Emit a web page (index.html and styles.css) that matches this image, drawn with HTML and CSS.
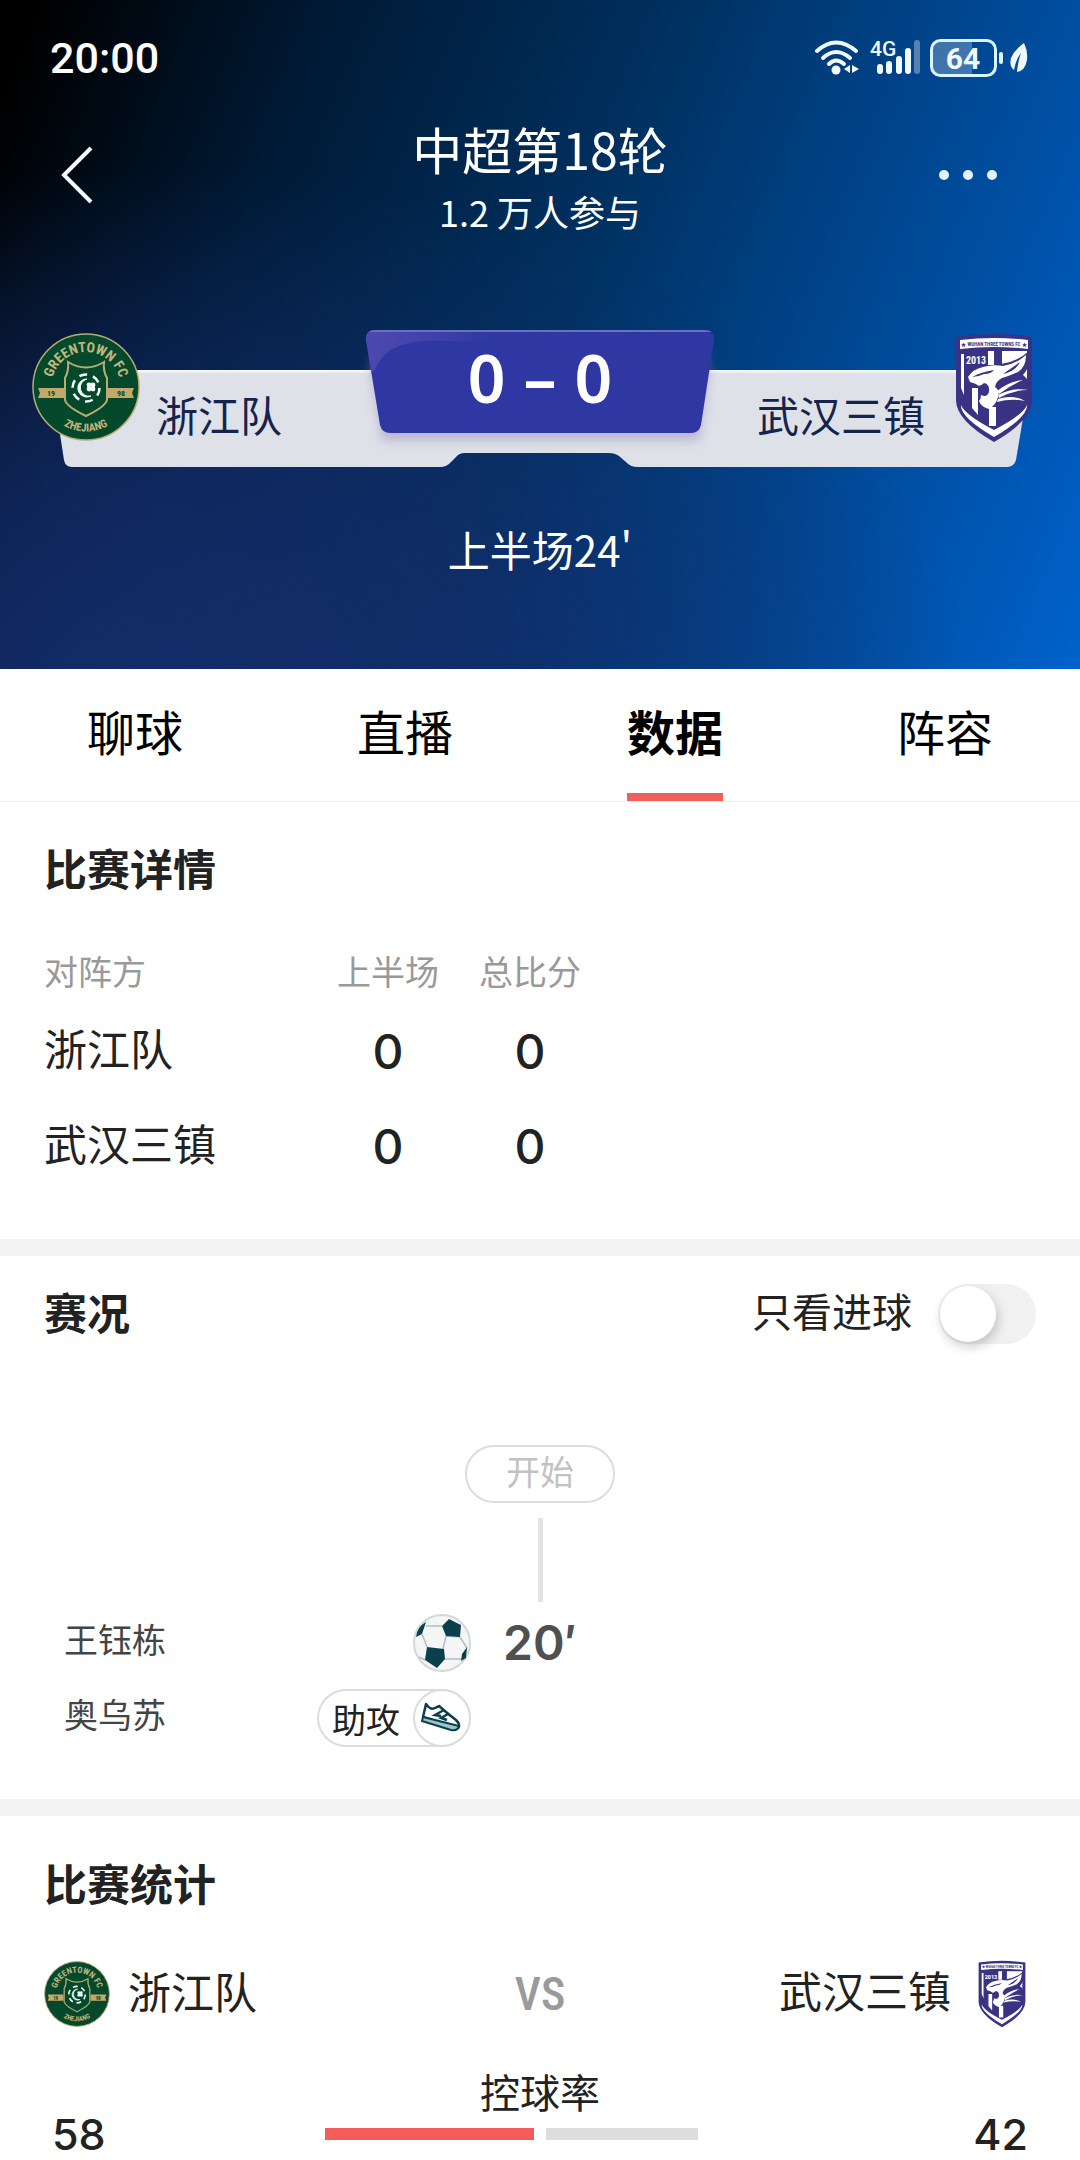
FILE: index.html
```
<!DOCTYPE html>
<html lang="zh-CN">
<head>
  <meta charset="UTF-8">
  <meta name="viewport" content="width=device-width, initial-scale=1">
  <title>中超第18轮</title>
  <link rel="stylesheet" href="styles.css">
</head>
<body>

  <!-- 队徽 -->
  <svg class="defs" aria-hidden="true">
    <symbol id="badge-zj" viewBox="0 0 108 108">
      <circle cx="54" cy="54" r="53" fill="#04492b" stroke="#b9ac72" stroke-width="1.5"/>
      <path id="arc-top" d="M19.500 53.500A34.500 34.500 0 0 1 88.500 53.500" fill="none"/>
      <path id="arc-bottom" d="M9.500 54A44.500 44.500 0 0 0 98.500 54" fill="none"/>
      <text class="badge-text" font-size="14" fill="#c3b67c" text-anchor="middle"><textPath href="#arc-top" startOffset="50%">GREENTOWN FC</textPath></text>
      <text class="badge-text" font-size="11" fill="#c3b67c" text-anchor="middle"><textPath href="#arc-bottom" startOffset="50%">ZHEJIANG</textPath></text>
      <path d="M6 55h26v10H6l2-5zM76 55h26l-2 5 2 5H76z" fill="#c3a868"/>
      <text class="badge-text" x="19" y="63" font-size="8" fill="#04492b" text-anchor="middle">19</text>
      <text class="badge-text" x="89" y="63" font-size="8" fill="#04492b" text-anchor="middle">98</text>
      <path d="M36 29q18 11 36 0q-1 9 3 16v22q-2 7-21 16q-19-9-21-16V45q4-7 3-16z" fill="#04492b" stroke="#b9ac72" stroke-width="2"/>
      <circle cx="54" cy="55" r="13.500" fill="none" stroke="#f3fffb" stroke-width="2.500" stroke-dasharray="8 6.100"/>
      <path d="M55 46a9 9 0 1 0 4 17a8.500 8.500 0 0 1-4-17z" fill="#f3fffb" stroke="#f3fffb"/>
      <g fill="#f3fffb"><circle cx="57" cy="52" r="2.400"/><circle cx="61" cy="52" r="2.400"/><circle cx="57" cy="56" r="2.400"/><circle cx="61" cy="56" r="2.400"/></g>
    </symbol>

    <symbol id="badge-wh" viewBox="0 0 78 110">
      <path d="M1 4Q39-2 77 4V68Q76 88 39 109Q2 88 1 68z" fill="#3a3283"/>
      <path d="M5 7Q39 3 73 7V16Q39 12 5 16z" fill="#fff"/>
      <text class="badge-text" x="39" y="13" font-size="5" fill="#3a3283" text-anchor="middle">★ WUHAN THREE TOWNS FC ★</text>
      <path d="M6 21h3v41l-3-7z" fill="#fff"/>
      <path d="M33 18h6v14h-6zM47 18h25v32L60 40H47z" fill="#fff"/>
      <path d="M17 55h6v27l-6-7zM34 74h7v19h-7z" fill="#fff"/>
      <text class="badge-text" x="21" y="31" font-size="10" fill="#fff" text-anchor="middle">2013</text>
      <!-- 豹头 -->
      <path d="M46 31Q62 29 74 18Q76 34 68 42Q76 48 75 60Q72 76 58 78L44 74z" fill="#3a3283"/>
      <path d="M13 44Q18 36 28 34Q38 31 48 33Q61 31 71 22Q71 34 63 39Q54 43 47 45Q41 48 40 54Q45 57 43 64Q41 72 34 76Q26 74 24 68Q26 66 26 62Q32 65 34 59Q35 51 29 50Q24 55 21 51L15 49z" fill="#fff"/>
      <path d="M17 44Q26 39 39 37Q36 41 29 41Q23 44 17 44zM48 41L65 29Q61 37 52 40z" fill="#3a3283"/>
      <path d="M42 58Q54 48 68 47Q56 52 44 61zM43 62Q58 54 73 57Q58 57 44 65zM43 66Q58 61 70 68Q56 65 42 69z" fill="#fff"/>
      <path d="M6 72Q10 82 39 97Q68 82 72 72Q73 84 39 104Q5 84 6 72z" fill="#fff"/>
    </symbol>
  </svg>

  <header class="hero">
    <div class="statusbar">
      <span class="clock">20:00</span>
      <span class="status-icons">
        <svg width="50" height="38" viewBox="0 0 50 38" aria-label="WiFi">
          <g fill="none" stroke="#f0faff" stroke-width="4" stroke-linecap="round">
            <path d="M3 12Q22-5 42 12"/><path d="M9 19Q22 7 36 19"/><path d="M15 25Q22 18 30 25"/>
          </g>
          <circle cx="22" cy="31" r="4.500" fill="#f0faff"/>
          <path d="M36 26v8l-6-4zM38 26l7 4-7 4z" fill="#f0faff"/>
        </svg>
        <svg class="signal" width="54" height="38" viewBox="0 0 54 38" aria-label="4G">
          <text class="net" x="0" y="17">4G</text>
          <g fill="#f0faff"><rect x="7" y="25" width="6" height="10" rx="3"/><rect x="16" y="22" width="6" height="13" rx="3"/><rect x="26" y="17" width="6" height="18" rx="3"/><rect x="35" y="9" width="6" height="26" rx="3"/></g>
          <rect x="44" y="1" width="6" height="34" rx="3" fill="#f0faff" opacity=".35"/>
        </svg>
        <svg width="74" height="38" viewBox="0 0 74 38" aria-label="电量 64%">
          <path d="M10 2h32v34H10a8 8 0 0 1-8-8V10a8 8 0 0 1 8-8z" fill="#fff" opacity=".25"/>
          <rect x="1.500" y="1.500" width="64" height="35" rx="9" fill="none" stroke="#d9f5ff" stroke-width="3"/>
          <text class="level" x="33" y="30" text-anchor="middle">64</text>
          <rect x="69" y="13" width="4" height="12" rx="2" fill="#d9f5ff"/>
        </svg>
        <svg width="18" height="32" viewBox="0 0 18 32" aria-label="省电">
          <path d="M14 1Q4 8 1 16Q-1 24 4 28Q6 17 11 11Q8 19 7 30Q15 29 17 18Q18 9 14 1z" fill="#f0faff"/>
        </svg>
      </span>
    </div>

    <div class="navbar">
      <button class="icon-btn back" type="button" aria-label="返回">
        <svg width="32" height="58" viewBox="0 0 32 58"><path d="M30 2L3 29L30 56" fill="none" stroke="#f2f8ff" stroke-width="4"/></svg>
      </button>
      <div class="heading">
        <h1>中超第18轮</h1>
        <p>1.2 万人参与</p>
      </div>
      <button class="icon-btn more" type="button" aria-label="更多">
        <svg width="58" height="12" viewBox="0 0 58 12" fill="#e4f4ff"><circle cx="5" cy="6" r="5"/><circle cx="29" cy="6" r="5"/><circle cx="53" cy="6" r="5"/></svg>
      </button>
    </div>

    <div class="scoreboard">
      <svg class="board-bg" viewBox="0 0 1016 138" preserveAspectRatio="none" aria-hidden="true">
        <defs>
          <linearGradient id="panel" x1="0" y1="0" x2="0" y2="1"><stop offset="0" stop-color="#fff"/><stop offset=".04" stop-color="#dfe1e9"/><stop offset="1" stop-color="#dfe1e9"/></linearGradient>
          <linearGradient id="shine"><stop offset="0" stop-color="#4d49b0"/><stop offset=".4" stop-color="#4543ac"/><stop offset="1" stop-color="#2f38a2"/></linearGradient>
          <filter id="soft" x="-10%" y="-10%" width="120%" height="140%"><feGaussianBlur stdDeviation="6"/></filter>
          <clipPath id="box"><path d="M344 0H672Q683 0 682 10L669 95Q667 103 659 103H358Q350 103 348 95L334 10Q333 0 344 0z"/></clipPath>
        </defs>
        <path d="M18 40H999L984 130Q982 137 975 137H606Q598 137 594 132L587 126Q583 123 577 123H433Q427 123 424 127L419 132Q415 137 408 137H40Q33 137 32 130z" fill="url(#panel)"/>
        <path d="M338 30H678L667 110H350z" fill="#8f84b4" opacity=".5" filter="url(#soft)"/>
        <g clip-path="url(#box)">
          <rect x="330" width="356" height="104" fill="#2f38a2"/>
          <path d="M330 0H460V11H390Q352 14 343 40L330 50z" fill="url(#shine)"/>
          <path d="M334 1H682" stroke="#6871c4" stroke-width="2"/>
        </g>
      </svg>
      <div class="side home">
        <svg class="badge-l" role="img" aria-label="浙江队"><use href="#badge-zj"/></svg>
        <span class="side-name">浙江队</span>
      </div>
      <div class="score"><span>0</span><span>–</span><span>0</span></div>
      <div class="side away">
        <span class="side-name">武汉三镇</span>
        <svg class="badge-r" role="img" aria-label="武汉三镇"><use href="#badge-wh"/></svg>
      </div>
    </div>

    <p class="phase">上半场24'</p>
  </header>

  <nav class="tabs">
    <button type="button">聊球</button>
    <button type="button">直播</button>
    <button type="button" class="active">数据</button>
    <button type="button">阵容</button>
  </nav>

  <main>
    <section class="detail">
      <h2>比赛详情</h2>
      <table>
        <thead>
          <tr><th scope="col">对阵方</th><th scope="col">上半场</th><th scope="col">总比分</th></tr>
        </thead>
        <tbody>
          <tr><th scope="row">浙江队</th><td>0</td><td>0</td></tr>
          <tr><th scope="row">武汉三镇</th><td>0</td><td>0</td></tr>
        </tbody>
      </table>
    </section>

    <section class="events">
      <div class="events-head">
        <h2>赛况</h2>
        <div class="only-goals">
          <label for="onlyGoals">只看进球</label>
          <input type="checkbox" id="onlyGoals" class="switch">
        </div>
      </div>

      <div class="timeline">
        <span class="start">开始</span>
        <span class="stem"></span>
        <div class="event">
          <div class="event-rows">
            <div class="event-row">
              <span class="player">王钰栋</span>
              <svg width="58" height="58" viewBox="0 0 58 58" role="img" aria-label="进球">
                <circle cx="29" cy="29" r="28" fill="#f4f5f5" stroke="#d3d9da" stroke-width="2"/>
                <path d="M13 12H29M9 20L14 33M33 22L30 35M47 23L54 34M32 45H48M12 46L6 43M33 22L47 23" fill="none" stroke="#b5bdbe" stroke-width="1.500"/>
                <path d="M36 5L48 11L47 23L33 22L29 12zM14 33L31 35L32 45L24 54L12 46zM13 8L9 20L3 23Q4 13 13 8zM54 33L53 44L48 47L49 40z" fill="#0c3f4c"/>
              </svg>
            </div>
            <div class="event-row">
              <span class="player">奥乌苏</span>
              <span class="assist">助攻
                <svg width="58" height="58" viewBox="0 0 58 58" aria-hidden="true">
                  <circle cx="29" cy="29" r="28" fill="#fff" stroke="#dcdcdc" stroke-width="2"/>
                  <path d="M13 15L10 28L45 39Q48 36 43 31Q35 25 26 17Q20 21 17 19Q15 18 13 15z" fill="#fff" stroke="#0c3f4c" stroke-width="2.500" stroke-linejoin="round"/>
                  <path d="M10 28L9 32L38 41Q45 42 46 37z" fill="#9dc3cb" stroke="#0c3f4c" stroke-width="2"/>
                  <path d="M31 21L22 26L28 27M35 25L28 29L34 31" fill="none" stroke="#0c3f4c" stroke-width="2.500"/>
                </svg>
              </span>
            </div>
          </div>
          <time class="minute">20′</time>
        </div>
      </div>
    </section>

    <section class="stats">
      <h2>比赛统计</h2>
      <div class="versus">
        <div class="team"><svg class="mini-l" aria-hidden="true"><use href="#badge-zj"/></svg><span>浙江队</span></div>
        <span class="vs">VS</span>
        <div class="team right"><span>武汉三镇</span><svg class="mini-r" aria-hidden="true"><use href="#badge-wh"/></svg></div>
      </div>
      <h3>控球率</h3>
      <div class="stat">
        <span class="val">58</span>
        <div class="bar"><i class="bar-home" style="flex-grow: 58"></i><i class="bar-away" style="flex-grow: 42"></i></div>
        <span class="val val-away">42</span>
      </div>
    </section>
  </main>

</body>
</html>
```
FILE: styles.css
```
:root {
  --text: #222;
  --muted: #999;
  --accent: #f45b5b;
  --band: #f3f4f5;
  --gutter: 44px;
  --cjk: "Noto Sans CJK SC", sans-serif;
  --num: Inter, "Noto Sans CJK SC", sans-serif;
}

* { box-sizing: border-box; }

body {
  margin: 0;
  background: #fff;
  color: var(--text);
  font-family: var(--cjk);
}

h1, h2, h3, p { margin: 0; }

button {
  border: none;
  background: none;
  padding: 0;
  font-family: inherit;
  cursor: pointer;
}

svg { display: block; }

.defs { display: none; }

.badge-text {
  font-family: "Roboto Condensed", Roboto, sans-serif;
  font-weight: 700;
}

/* 顶部 */
.hero {
  padding-bottom: 92px;
  color: #fff;
  background:
    radial-gradient(ellipse 75% 80% at 15% 105%, rgba(22, 46, 110, 0.95) 0%, rgba(20, 44, 106, 0.7) 45%, rgba(16, 40, 100, 0) 100%),
    linear-gradient(112deg, #000 3%, #001a36 25%, #00305f 50%, #004894 74%, #0062cc 100%);
}

.statusbar {
  display: flex;
  justify-content: space-between;
  align-items: center;
  height: 114px;
  padding: 2px 52px 0 50px;
}

.clock {
  font: 500 43px Roboto, sans-serif;
}

.status-icons {
  display: flex;
  align-items: center;
  gap: 6px;
}

.signal { overflow: visible; }

.net {
  font: 500 21px Roboto, sans-serif;
  fill: #f0faff;
}

.level {
  font: 700 30px Roboto, sans-serif;
  fill: #f0faff;
}

.navbar {
  display: grid;
  grid-template-columns: 1fr auto 1fr;
  align-items: center;
  height: 130px;
  padding: 0 61px;
}

.icon-btn {
  justify-self: start;
  padding-bottom: 8px;
}

.more {
  justify-self: end;
  padding-right: 22px;
}

.heading {
  padding-top: 4px;
  text-align: center;
}

.heading h1 {
  font-size: 50px;
  font-weight: 400;
  line-height: 60px;
}

.heading p {
  font-size: 36px;
  line-height: 66px;
}

.scoreboard {
  position: relative;
  display: grid;
  grid-template-columns: 1fr 348px 1fr;
  height: 138px;
  margin: 86px 32px 0;
}

.board-bg {
  position: absolute;
  inset: 0;
  width: 100%;
  height: 100%;
  overflow: visible;
}

.side {
  position: relative;
  display: flex;
  align-items: flex-start;
  gap: 16px;
  padding-top: 3px;
}

.away {
  justify-content: flex-end;
  gap: 30px;
  padding-right: 15px;
}

.badge-l { width: 108px; height: 108px; }
.badge-r { width: 78px; height: 110px; }

.side-name {
  padding-top: 53px;
  color: #14244d;
  font-size: 42px;
  line-height: 56px;
}

.score {
  position: relative;
  display: flex;
  justify-content: center;
  gap: 18px;
  font: 600 66px/94px "Noto Sans", sans-serif;
}

.phase {
  margin-top: 53px;
  font-size: 42px;
  line-height: 56px;
  text-align: center;
}

/* 标签 */
.tabs {
  display: flex;
  border-bottom: 1px solid #eee;
}

.tabs button {
  position: relative;
  flex: 1;
  height: 132px;
  padding-bottom: 11px;
  color: #000;
  font-size: 48px;
}

.tabs .active { font-weight: 700; }

.tabs .active::after {
  content: "";
  position: absolute;
  left: 50%;
  bottom: 0;
  width: 96px;
  height: 8px;
  margin-left: -48px;
  background: #ee5f5d;
}

section { padding: 35px var(--gutter) 0; }

h2 {
  font-size: 43px;
  font-weight: 700;
  line-height: 60px;
}

/* 比赛详情 */
.detail {
  padding-bottom: 48px;
  border-bottom: 17px solid var(--band);
}

table {
  margin-top: 42px;
  border-collapse: collapse;
  table-layout: fixed;
  width: 557px;
}

th, td {
  padding: 0;
  font-weight: 400;
}

thead th {
  width: 142px;
  height: 62px;
  color: var(--muted);
  font-size: 34px;
}

thead th:first-child { width: 273px; }

th:first-child { text-align: left; }

tbody th, tbody td {
  height: 95px;
  padding-bottom: 4px;
  font-size: 43px;
  line-height: 60px;
}

tbody td {
  padding: 6px 0 0;
  font-family: var(--num);
  font-size: 48px;
  font-weight: 500;
  text-align: center;
}

/* 赛况 */
.events {
  padding-top: 28px;
  padding-bottom: 52px;
  border-bottom: 17px solid var(--band);
}

.events-head {
  display: flex;
  justify-content: space-between;
  height: 60px;
}

.events-head h2 { line-height: 54px; }

.only-goals {
  display: flex;
  gap: 26px;
  font-size: 40px;
  line-height: 52px;
}

.switch {
  appearance: none;
  width: 98px;
  height: 60px;
  margin: 0;
  padding: 2px;
  border-radius: 30px;
  background: #f1f1f1;
  cursor: pointer;
}

.switch::before {
  content: "";
  display: block;
  width: 56px;
  height: 56px;
  border-radius: 50%;
  background: #fff;
  box-shadow: 2px 5px 12px rgba(0, 0, 0, 0.2);
}

.switch:checked { background: var(--accent); }
.switch:checked::before { margin-left: auto; }

.timeline {
  display: flex;
  flex-direction: column;
  align-items: center;
  margin-top: 101px;
}

.start {
  width: 150px;
  height: 58px;
  border: 2px solid #ddd;
  border-radius: 29px;
  color: #c2c2c2;
  font-size: 34px;
  line-height: 48px;
  text-align: center;
}

.stem {
  width: 5px;
  height: 84px;
  margin: 15px 0 12px;
  background: #e3e3e3;
}

.event {
  display: grid;
  grid-template-columns: 1fr 138px 1fr;
  width: 100%;
}

.event-rows {
  display: flex;
  flex-direction: column;
  gap: 17px;
  padding-left: 20px;
}

.event-row {
  display: flex;
  justify-content: space-between;
  height: 58px;
  color: #444;
  font-size: 34px;
}

.player { line-height: 50px; }

.assist {
  display: flex;
  justify-content: space-between;
  align-items: center;
  width: 154px;
  height: 58px;
  padding-left: 13px;
  border: 2px solid #dcdcdc;
  border-right: none;
  border-radius: 29px;
  color: #222;
}

.minute {
  color: #505050;
  font: 600 48px/58px var(--num);
  text-align: center;
}

/* 比赛统计 */
.stats { padding-top: 36px; }

.versus {
  display: grid;
  grid-template-columns: 1fr auto 1fr;
  align-items: center;
  margin-top: 48px;
}

.team {
  display: flex;
  gap: 18px;
  font-size: 43px;
  line-height: 58px;
}

.team.right {
  justify-content: flex-end;
  gap: 27px;
  padding-right: 10px;
}

.mini-l { width: 66px; height: 66px; }
.mini-r { width: 48px; height: 68px; }

.vs {
  color: #9a9a9a;
  font: 500 46px "Roboto Condensed", Roboto, sans-serif;
}

h3 {
  margin-top: 42px;
  font-size: 40px;
  font-weight: 400;
  line-height: 42px;
  text-align: center;
}

.stat {
  display: grid;
  grid-template-columns: 273fr 373fr 330fr;
  align-items: center;
  padding: 0 8px;
}

.val {
  font: 500 43px/44px var(--num);
}

.val-away { text-align: right; }

.bar {
  display: flex;
  gap: 12px;
  height: 12px;
}

.bar-home { background: var(--accent); }
.bar-away { background: #ddd; }
```
